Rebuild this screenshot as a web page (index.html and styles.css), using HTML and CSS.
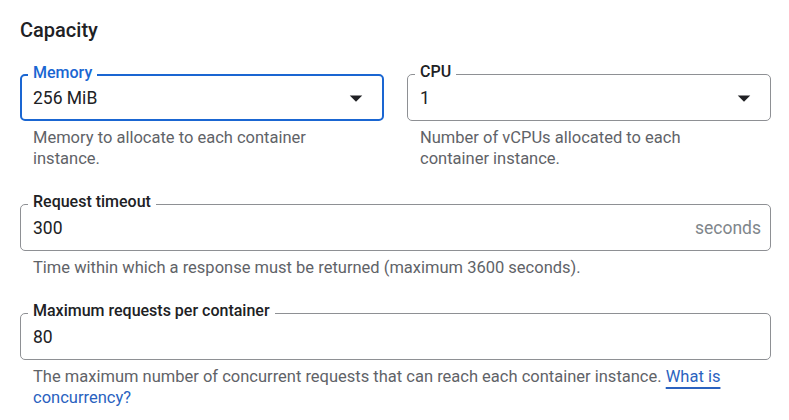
FILE: index.html
```html
<!DOCTYPE html>
<html lang="en">
<head>
<meta charset="utf-8">
<title>Capacity</title>
<link rel="stylesheet" href="styles.css">
</head>
<body>
<main class="capacity">
  <h2 class="title">Capacity</h2>
  <div class="row">
    <div class="group">
      <div class="field field--focused field--select">
        <span class="label">Memory</span>
        <span class="value">256 MiB</span>
        <svg class="arrow" viewBox="0 0 24 24" width="30" height="30" aria-hidden="true"><path d="M7 10l5 5 5-5z"/></svg>
      </div>
      <p class="hint">Memory to allocate to each container instance.</p>
    </div>
    <div class="group">
      <div class="field field--select">
        <span class="label">CPU</span>
        <span class="value">1</span>
        <svg class="arrow" viewBox="0 0 24 24" width="30" height="30" aria-hidden="true"><path d="M7 10l5 5 5-5z"/></svg>
      </div>
      <p class="hint">Number of vCPUs allocated to each container instance.</p>
    </div>
  </div>
  <div class="group">
    <div class="field field--suffix">
      <span class="label">Request timeout</span>
      <span class="value">300</span>
      <span class="suffix">seconds</span>
    </div>
    <p class="hint">Time within which a response must be returned (maximum 3600 seconds).</p>
  </div>
  <div class="group group--last">
    <div class="field">
      <span class="label">Maximum requests per container</span>
      <span class="value">80</span>
    </div>
    <p class="hint">The maximum number of concurrent requests that can reach each container instance. <a class="link" href="#">What is concurrency?</a></p>
  </div>
</main>
</body>
</html>
```

FILE: styles.css
```css
* { box-sizing: border-box; }

html, body {
  margin: 0;
  background: #ffffff;
}

body {
  font-family: Roboto, "Liberation Sans", Arial, sans-serif;
  color: #202124;
}

.capacity {
  width: 789px;
  padding: 18px 18px 0 20px;
}

.title {
  margin: 0 0 32px;
  font-size: 20px;
  line-height: 24px;
  font-weight: 500;
  color: #202124;
}

.row {
  display: grid;
  grid-template-columns: 1fr 1fr;
  column-gap: 23px;
}

.group {
  margin-bottom: 35px;
}

.group--last {
  margin-bottom: 0;
}

.field {
  position: relative;
  height: 47px;
  display: flex;
  align-items: center;
  padding: 0 9px 0 12px;
  border: 1px solid #8e9094;
  border-radius: 5px;
}

.field--select {
  padding-right: 11px;
}

.field--focused {
  border: 2px solid #1a66d2;
  padding-left: 11px;
  padding-right: 11px;
}

.label {
  position: absolute;
  top: -12px;
  left: 7px;
  padding: 0 5px;
  background: #ffffff;
  font-size: 16px;
  line-height: 18px;
  font-weight: 500;
  color: #202124;
  white-space: nowrap;
}

.field--focused .label {
  top: -12px;
  left: 6px;
  color: #1a66d2;
}

.value {
  flex: 1;
  font-size: 17.5px;
  line-height: 24px;
  color: #202124;
}

.arrow {
  flex: none;
  fill: #202124;
}

.suffix {
  font-size: 17.5px;
  line-height: 24px;
  color: #80868b;
}

.hint {
  margin: 6px 0 0;
  padding: 0 32px 0 13px;
  font-size: 16.5px;
  line-height: 21px;
  color: #5f6368;
}

.link {
  color: #2a62c0;
  text-decoration: underline;
  text-decoration-thickness: 1.5px;
  text-underline-offset: 5px;
}
```
